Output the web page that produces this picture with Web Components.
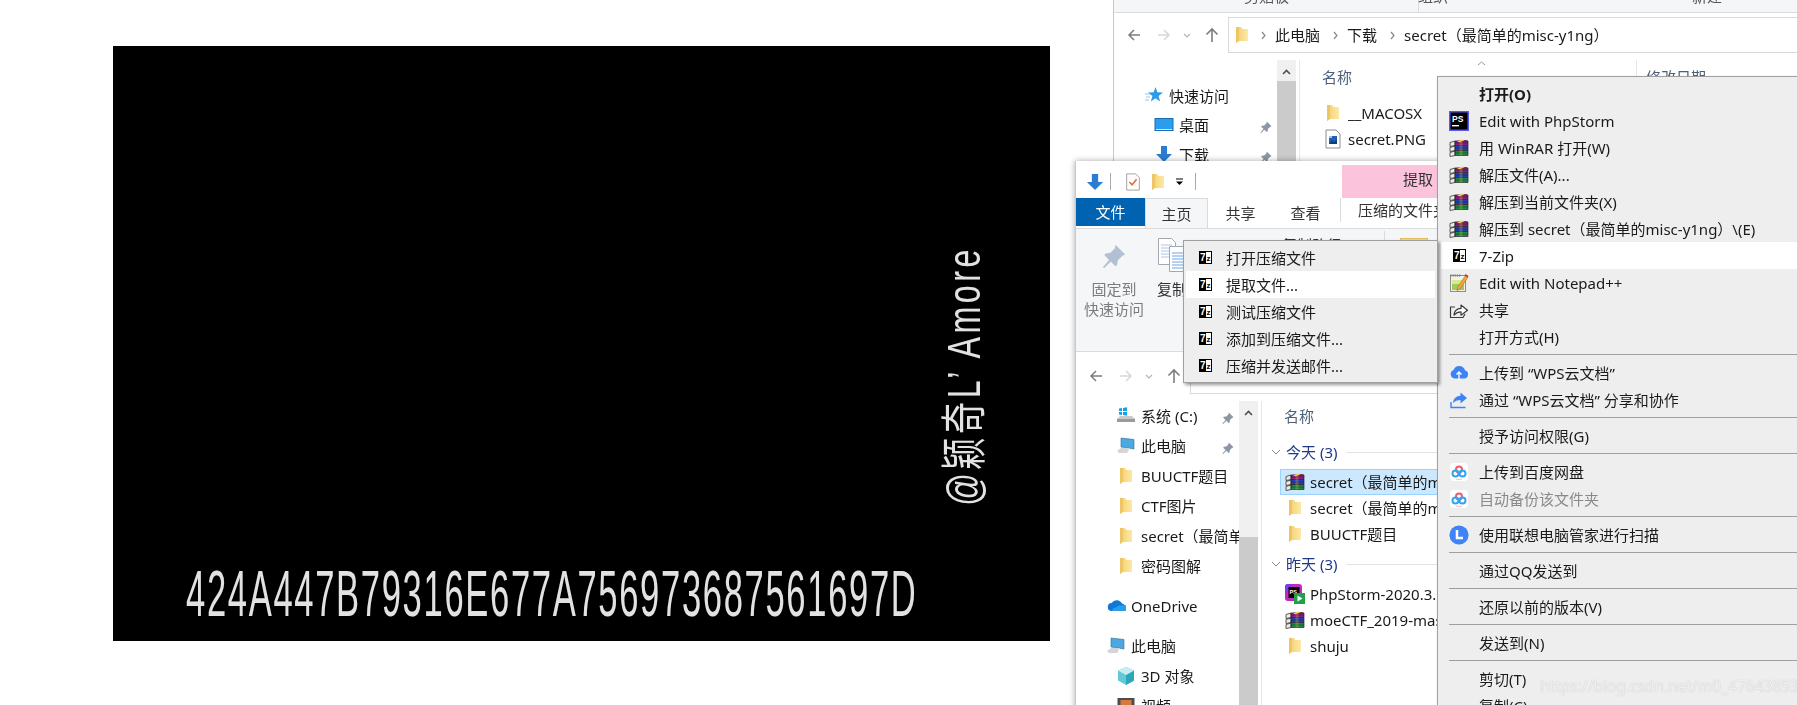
<!DOCTYPE html>
<html lang="zh">
<head>
<meta charset="utf-8">
<title>secret</title>
<style>
  html, body { margin: 0; height: 100%; overflow: hidden; background: #fff; }
</style>
</head>
<body>
<x-stage>
  <x-poster number="424A447B79316E677A756973687561697D" credit="@颖奇L’ Amore"></x-poster>

  <x-window slot="windows" class="back">
    <x-ribbon-strip slot="top"></x-ribbon-strip>
    <x-navbar slot="nav" crumbs="此电脑|下载|secret（最简单的misc-y1ng）" style="--nav-top:4px;--nav-h:47px"></x-navbar>
    <x-tree slot="tree" style="--tree-top:21px;--row-h:29.6px">
      <x-tree-row icon="star" level="0">快速访问</x-tree-row>
      <x-tree-row icon="desktop" pin>桌面</x-tree-row>
      <x-tree-row icon="download" pin>下载</x-tree-row>
    </x-tree>
    <x-scrollbar slot="scroll" arrow="21" track="0"></x-scrollbar>
    <x-filelist slot="list" style="--head-h:33px;--head-gap:7px" sort>
      <x-file-row icon="folder">__MACOSX</x-file-row>
      <x-file-row icon="png">secret.PNG</x-file-row>
    </x-filelist>
  </x-window>

  <x-window slot="windows" class="front">
    <x-qat slot="top"></x-qat>
    <x-tabs slot="top"></x-tabs>
    <x-home-ribbon slot="top"></x-home-ribbon>
    <x-navbar slot="nav" style="--nav-top:6px;--nav-h:49px"></x-navbar>
    <x-tree slot="tree" style="--tree-top:0px;--row-h:30px">
      <x-tree-row icon="drive" pin>系统 (C:)</x-tree-row>
      <x-tree-row icon="pc" pin>此电脑</x-tree-row>
      <x-tree-row icon="folder">BUUCTF题目</x-tree-row>
      <x-tree-row icon="folder">CTF图片</x-tree-row>
      <x-tree-row icon="folder">secret（最简单的misc-y1ng）</x-tree-row>
      <x-tree-row icon="folder">密码图解</x-tree-row>
      <x-tree-row icon="onedrive" level="0" gap>OneDrive</x-tree-row>
      <x-tree-row icon="pc" level="0" gap>此电脑</x-tree-row>
      <x-tree-row icon="cube">3D 对象</x-tree-row>
      <x-tree-row icon="video">视频</x-tree-row>
    </x-tree>
    <x-scrollbar slot="scroll" arrow="36" track="100"></x-scrollbar>
    <x-filelist slot="list" style="--head-h:30px;--head-gap:8px">
      <x-group-row>今天 (3)</x-group-row>
      <x-file-row icon="winrar" selected>secret（最简单的misc-y1ng）.zip</x-file-row>
      <x-file-row icon="folder">secret（最简单的misc-y1ng）</x-file-row>
      <x-file-row icon="folder">BUUCTF题目</x-file-row>
      <x-group-row>昨天 (3)</x-group-row>
      <x-file-row icon="phpstorm">PhpStorm-2020.3.exe</x-file-row>
      <x-file-row icon="winrar">moeCTF_2019-master.zip</x-file-row>
      <x-file-row icon="folder">shuju</x-file-row>
    </x-filelist>
  </x-window>

  <x-menu slot="windows" class="main" style="--item-pad:8px;--icon-w:20px;--icon-gap:10px;--menu-pad:3px">
    <x-menu-item strong>打开(O)</x-menu-item>
    <x-menu-item icon="ps">Edit with PhpStorm</x-menu-item>
    <x-menu-item icon="winrar">用 WinRAR 打开(W)</x-menu-item>
    <x-menu-item icon="winrar">解压文件(A)...</x-menu-item>
    <x-menu-item icon="winrar">解压到当前文件夹(X)</x-menu-item>
    <x-menu-item icon="winrar">解压到 secret（最简单的misc-y1ng）\(E)</x-menu-item>
    <x-menu-item icon="sevenzip" active>7-Zip</x-menu-item>
    <x-menu-item icon="notepad">Edit with Notepad++</x-menu-item>
    <x-menu-item icon="share">共享</x-menu-item>
    <x-menu-item>打开方式(H)</x-menu-item>
    <x-menu-sep></x-menu-sep>
    <x-menu-item icon="wpsup">上传到 “WPS云文档”</x-menu-item>
    <x-menu-item icon="wpsshare">通过 “WPS云文档” 分享和协作</x-menu-item>
    <x-menu-sep></x-menu-sep>
    <x-menu-item>授予访问权限(G)</x-menu-item>
    <x-menu-sep></x-menu-sep>
    <x-menu-item icon="baidu">上传到百度网盘</x-menu-item>
    <x-menu-item icon="baidu" disabled>自动备份该文件夹</x-menu-item>
    <x-menu-sep></x-menu-sep>
    <x-menu-item icon="lenovo">使用联想电脑管家进行扫描</x-menu-item>
    <x-menu-sep></x-menu-sep>
    <x-menu-item>通过QQ发送到</x-menu-item>
    <x-menu-sep></x-menu-sep>
    <x-menu-item>还原以前的版本(V)</x-menu-item>
    <x-menu-sep></x-menu-sep>
    <x-menu-item>发送到(N)</x-menu-item>
    <x-menu-sep></x-menu-sep>
    <x-menu-item>剪切(T)</x-menu-item>
    <x-menu-item>复制(C)</x-menu-item>
  </x-menu>

  <x-menu slot="windows" class="sub" style="--item-pad:13px;--icon-w:13px;--icon-gap:14px;--menu-pad:2px">
    <x-menu-item icon="sevenzip">打开压缩文件</x-menu-item>
    <x-menu-item icon="sevenzip" active>提取文件...</x-menu-item>
    <x-menu-item icon="sevenzip">测试压缩文件</x-menu-item>
    <x-menu-item icon="sevenzip">添加到压缩文件...</x-menu-item>
    <x-menu-item icon="sevenzip">压缩并发送邮件...</x-menu-item>
  </x-menu>

  <x-watermark slot="windows">https://blog.csdn.net/m0_47643893</x-watermark>
</x-stage>

<script>
const UI_FONT = '"Noto Sans", "Noto Sans CJK SC", sans-serif';

// every icon is drawn on a 20x20 box
const ICONS = {
  folder: `<defs><linearGradient id="f" x1="0" x2="1" y1="0" y2="0"><stop offset="0" stop-color="#f3cf70"/><stop offset="1" stop-color="#fde9a6"/></linearGradient></defs>
    <path d="M4 2h5l1.500 2H16v12H7.500L4 18z" fill="url(#f)"/><path d="M4 2h3v13l-3 3z" fill="#eec564"/>`,
  winrar: `<path d="M6 3l11-1 2 1v4H6z" fill="#8d1f74"/><path d="M6 7.500h13v4.500H6z" fill="#2340b8"/><path d="M6 12.500h13V17.500H6z" fill="#1d8a40"/>
    <path d="M6 5h13M6 10h13M6 15h13" stroke="#000" stroke-opacity=".3"/>
    <path d="M1 4.500L6 3v4.500L1 8.500zM1 9.500l5-1.500v4.500L1 13.500zM1 14.500l5-1.500v4.500L1 18.500z" fill="#ecece6" stroke="#333" stroke-width=".8"/>
    <path d="M6 3h13v4.500H6zM6 7.500h13v5H6zM6 12.500h13v5H6z" fill="none" stroke="#2a2230" stroke-width=".7"/>
    <path d="M10.500 3h3v14.500h-3z" fill="#d6b548" opacity=".3"/><path d="M8 3.500l5-2 2.500.8-5 2z" fill="#f2d15a"/>`,
  ps: `<rect x=".75" y=".75" width="18.500" height="18.500" fill="#000" stroke="#5b57f2" stroke-width="1.500"/>
    <text x="3" y="10.500" font-family="Liberation Sans, sans-serif" font-weight="700" font-size="8.500" fill="#fff">PS</text>
    <rect x="3" y="14" width="7" height="1.400" fill="#fff"/>`,
  notepad: `<rect x="1.500" y="2.500" width="15" height="16" fill="#f2f2ec" stroke="#8d8d85"/><rect x="3" y="7" width="12" height="10" fill="#9fcb5c"/>
    <path d="M3 7h12v4H3z" fill="#dbe88e"/><path d="M1.800 1.200v2.600M4 1.200v2.600M6.200 1.200v2.600M8.400 1.200v2.600M10.600 1.200v2.600" stroke="#777" stroke-width=".8"/>
    <path d="M16.500 2.500L19 4.200 11 16l-3 1.600.4-3.200z" fill="#f2a73a" stroke="#a8701c" stroke-width=".6"/><path d="M16.500 1l3 2-1 1.600-2.800-2z" fill="#c8302c"/>`,
  share: `<path d="M6 7H1.500v10.500H14l2-3.500" fill="none" stroke="#3c3c3c" stroke-width="1.200"/><path d="M5 15c.4-4 3.200-6.400 7-6.600V5l6.500 5.300-6.500 4.900v-3.400c-2.800 0-5 1-7 3.200z" fill="#fff" stroke="#3c3c3c" stroke-width="1.200" stroke-linejoin="round"/>`,
  wpsup: `<path d="M5.500 15.500A4.400 4.400 0 0 1 4.600 7 6 6 0 0 1 16 7.300a4.200 4.200 0 0 1-.7 8.200z" fill="#3d83f7"/><path d="M10 17.500V9.500M7.500 11.500L10 9l2.500 2.500" stroke="#fff" stroke-width="1.300" fill="none"/>`,
  wpsshare: `<path d="M2 12v5.500h14.500" fill="none" stroke="#3d83f7" stroke-width="1.400"/><path d="M4 13c.4-4.400 3.400-7 7.500-7.200V2.500L18 8l-6.500 5.500V10C8.500 10 6 11 4 13z" fill="#3d83f7"/>`,
  baidu: `<rect x="1" y="1" width="18" height="18" rx="4" fill="#fff"/><circle cx="10" cy="7.500" r="3" fill="none" stroke="#ef5a6e" stroke-width="2"/>
    <circle cx="6.500" cy="11.500" r="3" fill="none" stroke="#2fa6f2" stroke-width="2"/><circle cx="13.500" cy="11.500" r="3" fill="none" stroke="#2fa6f2" stroke-width="2"/><rect x="7" y="16.800" width="6" height="1" fill="#f4b9c4"/>`,
  lenovo: `<circle cx="10" cy="10" r="9.600" fill="#3f83f8"/><path d="M8 5v8h6" fill="none" stroke="#fff" stroke-width="2.500"/>`,
  pin: `<path d="M11 2l7 7-2 .8-3.200 3.200-.6 3.500-1.200.8-3.300-3.300L3 18.500 2 18l4.500-5.200L3.200 9.500 4 8.300l3.500-.6L10.700 4.500z" fill="currentColor"/>`,
  star: `<path d="M11.500 1l1.900 5.300 5.600.2-4.400 3.500 1.500 5.400-4.600-3.100-4.700 3.100 1.600-5.400L4 6.500l5.600-.2z" fill="#2f9ae8"/><path d="M1 8h5M2 11h4M1 14h4" stroke="#8ecaf2" stroke-width="1"/>`,
  desktop: `<rect x="1" y="3.500" width="18" height="12" fill="#2a9df0" stroke="#1a6fb4"/><path d="M2 14h16v1H2z" fill="#cfe9fb"/>`,
  download: `<path d="M7 1h6v8h5l-8 8-8-8h5z" fill="#2b7cd3"/>`,
  drive: `<path d="M1 13l3-3h12l3 3v3H1z" fill="#c9c9c9"/><path d="M1 13h18v3H1z" fill="#9a9a9a"/><path d="M3 2.500l3-.5v3H3zM7 1.900l4-.6V5H7zM3 6h3v3l-3-.5zM7 6h4v3.800L7 9z" fill="#12a0e8"/>`,
  pc: `<path d="M5 2l13 1.500v9.500L5 11z" fill="#4ba9e2" stroke="#2c6e9b" stroke-width=".6"/><path d="M1 15l4-3h9l-3 5H3z" fill="#d5d5d5"/>`,
  onedrive: `<path d="M6 15a4 4 0 0 1-.4-8A6 6 0 0 1 16 7.500 3.800 3.800 0 0 1 16 15z" fill="#0f78d4"/><path d="M6 15h14a3 3 0 0 0-3-5.500c-3-1-6 .5-7 2-2-.2-4 1.500-4 3.500z" fill="#2e9be8"/>`,
  cube: `<path d="M10 1l8 3.500v10L10 19l-8-4.500v-10z" fill="#65c8d6"/><path d="M10 9l8-4.500v10L10 19z" fill="#2aa7b8"/><path d="M10 1l8 3.500L10 9 2 4.500z" fill="#c6eef2"/>`,
  video: `<rect x="1.500" y="2" width="17" height="16" fill="#4d4d4d"/><rect x="4.500" y="4" width="11" height="5" fill="#d97a3a"/><rect x="4.500" y="10" width="11" height="6" fill="#5aa0d8"/>`,
  png: `<path d="M3 1h10l4 4v14H3z" fill="#fff" stroke="#8d8d8d"/><rect x="6" y="7" width="8" height="8" fill="#1f63b5"/><path d="M6 15l3-4 2 2 3-3v5z" fill="#0d3f7d"/><rect x="6" y="7" width="3" height="2" fill="#9ccbf2"/>`,
  phpstorm: `<rect x="0" y="0" width="17" height="17" rx="3" fill="#c02ac0"/><path d="M0 9V3a3 3 0 0 1 3-3h5z" fill="#7a3df0"/><rect x="3.500" y="3" width="11" height="11" fill="#000"/>
    <text x="4.500" y="9.500" font-family="Liberation Sans, sans-serif" font-weight="700" font-size="5.500" fill="#fff">PS</text>
    <rect x="9" y="9" width="11" height="11" fill="#1fa14a"/><path d="M12.500 11.500l5 3-5 3z" fill="#fff"/>`,
  qatdown: `<path d="M6.500 1h7v9H19l-9 9-9-9h5.500z" fill="#2b7cd3"/>`,
  checkdoc: `<path d="M3 1h10l4 4v14H3z" fill="#fff" stroke="#9a9a9a"/><path d="M6 10l3 3 5-6" fill="none" stroke="#e8683a" stroke-width="1.800"/>`
};

const icon = (name) => {
  if (name === 'sevenzip') {
    return `<svg viewBox="0 0 13 13" width="13" height="13"><rect width="7" height="13" fill="#000"/><rect x="6.500" y=".5" width="6" height="12" fill="#fff" stroke="#000"/>
      <text x="1" y="10" font-family="Liberation Sans, sans-serif" font-weight="700" font-size="10" fill="#fff">7</text>
      <text x="7.500" y="10" font-family="Liberation Sans, sans-serif" font-weight="700" font-size="8" fill="#000">z</text></svg>`;
  }
  return `<svg viewBox="0 0 20 20" width="100%" height="100%">${ICONS[name] || ''}</svg>`;
};

class UiElement extends HTMLElement {
  constructor() {
    super();
    this.attachShadow({ mode: 'open' });
  }
  connectedCallback() {
    this.shadowRoot.innerHTML = this.render();
  }
}

class XStage extends UiElement {
  render() {
    return `<style>
      :host { display: block; position: relative; width: 1797px; height: 705px; overflow: hidden; padding: 46px 0 0 113px; box-sizing: border-box; }
      ::slotted(.back) { position: absolute; left: 1113px; top: 0; width: 760px; height: 320px; filter: blur(.35px); }
      ::slotted(.front) { position: absolute; left: 1075px; top: 161px; width: 560px; height: 560px; box-shadow: 0 0 6px rgba(0,0,0,.35); filter: blur(.35px); }
      ::slotted(.main) { position: absolute; left: 1437px; top: 76px; width: 420px; filter: blur(.35px); }
      ::slotted(.sub) { position: absolute; left: 1183px; top: 240px; width: 255px; filter: blur(.35px); }
      ::slotted(x-watermark) { position: absolute; left: 1540px; top: 673px; }
    </style><slot></slot><slot name="windows"></slot>`;
  }
}

class XPoster extends UiElement {
  render() {
    return `<style>
      :host { display: flex; flex-direction: column; width: 937px; height: 595px; background: #000; color: #e2e2e2; font-family: "Liberation Sans", "Noto Sans CJK SC", sans-serif; overflow: hidden; }
      .credit { align-self: flex-end; margin: 204px 64px 0 0; width: 44px; height: 252px; display: flex; align-items: center; justify-content: center; filter: blur(.5px); }
      .credit span { white-space: nowrap; font-size: 46px; line-height: 44px; letter-spacing: 5px; transform: rotate(-90deg) scale(.7, 1); }
      .number { margin: auto 0 16px 73px; white-space: nowrap; font-size: 64px; line-height: 62px; letter-spacing: 3.100px; width: 731px; transform: scaleX(.54); transform-origin: left center; filter: blur(.5px); }
    </style>
    <div class="credit"><span>${this.getAttribute('credit')}</span></div>
    <div class="number">${this.getAttribute('number')}</div>`;
  }
}

class XWindow extends UiElement {
  render() {
    return `<style>
      :host { display: block; background: #fff; border-left: 1px solid #c9c9c9; color: #1a1a1a; font: 15px/20px ${UI_FONT}; }
      .main { display: grid; grid-template-columns: 163px 19px 1fr; align-items: stretch; height: 420px; }
      ::slotted(x-filelist) { margin-left: 3px; }
    </style>
    <slot name="top"></slot><slot name="nav"></slot>
    <div class="main"><slot name="tree"></slot><slot name="scroll"></slot><slot name="list"></slot></div>`;
  }
}

class XRibbonStrip extends UiElement {
  render() {
    return `<style>
      :host { display: flex; height: 12px; background: #f5f6f7; border-bottom: 1px solid #dadbdc; overflow: hidden; color: #555; font-size: 15px; line-height: 20px; }
      span { position: relative; top: -14px; white-space: nowrap; }
      .a { margin-left: 130px; }
      .sep { margin-left: 129px; width: 1px; background: #dadbdc; }
      .b { margin-left: -1px; }
      .c { margin-left: 244px; }
    </style><span class="a">剪贴板</span><div class="sep"></div><span class="b">组织</span><span class="c">新建</span>`;
  }
}

class XNavbar extends UiElement {
  render() {
    const crumbs = (this.getAttribute('crumbs') || '').split('|').filter(Boolean);
    const chev = '<svg class="chev" viewBox="0 0 5 9" width="5" height="9"><path d="M1 1l3 3.500L1 8" fill="none" stroke="#888" stroke-width="1.200"/></svg>';
    return `<style>
      :host { display: flex; align-items: flex-start; box-sizing: border-box; height: var(--nav-h); padding: var(--nav-top) 0 0 5px; }
      .btn { height: 36px; display: flex; align-items: center; justify-content: center; flex: none; }
      .box { flex: 1; height: 36px; box-sizing: border-box; border: 1px solid #d9d9d9; display: flex; align-items: center; padding-left: 5px; white-space: nowrap; overflow: hidden; }
      .fold { width: 20px; height: 20px; margin-left: -2px; }
      .chev { margin: 0 9px 0 13px; flex: none; }
      .fold + .chev { margin-left: 9px; }
    </style>
    <div class="btn" style="width:30px"><svg width="14" height="14" viewBox="0 0 14 14"><path d="M13 7H2M7 2L2 7l5 5" fill="none" stroke="#7d7d7d" stroke-width="1.500"/></svg></div>
    <div class="btn" style="width:30px"><svg width="14" height="14" viewBox="0 0 14 14"><path d="M1 7h11M7 2l5 5-5 5" fill="none" stroke="#d8d8d8" stroke-width="1.500"/></svg></div>
    <div class="btn" style="width:16px"><svg width="8" height="5" viewBox="0 0 8 5"><path d="M1 1l3 3 3-3" fill="none" stroke="#b5b5b5" stroke-width="1.200"/></svg></div>
    <div class="btn" style="width:33px"><svg width="14" height="16" viewBox="0 0 14 16"><path d="M7 15V2M1.500 7.500L7 2l5.500 5.500" fill="none" stroke="#7d7d7d" stroke-width="1.600"/></svg></div>
    <div class="box">${crumbs.length ? `<div class="fold">${icon('folder')}</div>` + crumbs.map((c) => `${chev}<span>${c}</span>`).join('') : ''}</div>`;
  }
}

class XQat extends UiElement {
  render() {
    return `<style>
      :host { display: flex; align-items: center; height: 37px; box-sizing: border-box; padding: 4px 0 0 10px; }
      .i { width: 18px; height: 18px; flex: none; }
      .sep { width: 1px; height: 17px; background: #a8a8a8; flex: none; }
      .tab { margin-left: 146px; width: 152px; height: 33px; line-height: 29px; background: #fbc4dc; text-align: center; color: #333; flex: none; }
    </style>
    <div class="i">${icon('qatdown')}</div>
    <div class="sep" style="margin-left:6px"></div>
    <div class="i" style="margin-left:13px">${icon('checkdoc')}</div>
    <div class="i" style="margin-left:6px;width:20px;height:20px">${icon('folder')}</div>
    <svg width="9" height="8" viewBox="0 0 9 8" style="margin-left:7px;flex:none"><path d="M1 1h7" stroke="#000"/><path d="M1 3.500h7L4.500 7z" fill="#000"/></svg>
    <div class="sep" style="margin-left:11px"></div>
    <div class="tab">提取</div>`;
  }
}

class XTabs extends UiElement {
  render() {
    return `<style>
      :host { display: flex; height: 31px; box-sizing: border-box; border-bottom: 1px solid #dadbdc; color: #333; white-space: nowrap; }
      div { display: flex; align-items: center; justify-content: center; flex: none; height: 30px; }
      .file { width: 69px; height: 28px; background: #0063b1; color: #fff; }
      .home { width: 63px; background: #f5f6f7; border: 1px solid #dadbdc; border-bottom: 0; box-sizing: border-box; }
      .t { width: 65px; }
      .ctx { margin-left: 2px; border-left: 1px solid #dadbdc; padding-left: 17px; height: 24px; }
    </style>
    <div class="file">文件</div><div class="home">主页</div><div class="t">共享</div><div class="t">查看</div><div class="ctx">压缩的文件夹工具</div>`;
  }
}

class XHomeRibbon extends UiElement {
  render() {
    return `<style>
      :host { display: flex; height: 123px; box-sizing: border-box; background: #f5f6f7; border-bottom: 1px solid #dadbdc; padding-top: 9px; white-space: nowrap; overflow: hidden; }
      .pin { width: 76px; display: flex; flex-direction: column; align-items: center; color: #7c7c7c; }
      .pin .i { width: 28px; height: 28px; margin: 4px 0 9px; color: #b3bfd2; }
      .copy { margin-left: 5px; width: 60px; color: #333; }
      .copy svg { display: block; margin-bottom: 7px; }
      .path { margin-left: 65px; margin-top: -3px; color: #333; }
      .sep { margin-left: 42px; width: 1px; height: 100px; background: #dadbdc; margin-top: -7px; }
      .y { margin-left: 15px; width: 26px; height: 24px; background: #f6d77c; border: 1px solid #e3bf5c; }
    </style>
    <div class="pin"><div class="i">${icon('pin')}</div><span>固定到</span><span>快速访问</span></div>
    <div class="copy"><svg width="34" height="34" viewBox="0 0 34 34">
      <path d="M1.500 .5h13l4 4v22h-17z" fill="#fff" stroke="#a4a8ae"/><path d="M4 7h11M4 10h11M4 13h11M4 16h11M4 19h11" stroke="#a8c6ec"/>
      <path d="M12.500 8.500h15l5 5v20h-20z" fill="#fff" stroke="#a4a8ae"/><path d="M15 15h15M15 18h15M15 21h15M15 24h15M15 27h15M15 30h15" stroke="#6fa5e6"/></svg>复制</div>
    <div class="path">复制路径</div><div class="sep"></div><div class="y"></div>`;
  }
}

class XTree extends UiElement {
  render() {
    return `<style>:host { display: block; box-sizing: border-box; padding-top: var(--tree-top); overflow: hidden; min-width: 0; }</style><slot></slot>`;
  }
}

class XTreeRow extends UiElement {
  render() {
    const top = this.getAttribute('level') === '0';
    return `<style>
      :host { display: flex; align-items: center; height: var(--row-h); white-space: nowrap; padding-left: ${top ? 30 : 40}px; position: relative; overflow: hidden; ${this.hasAttribute('gap') ? 'margin-top: 10px;' : ''} }
      .i { width: 20px; height: 20px; margin-right: 5px; flex: none; }
      .p { position: absolute; right: 4px; top: calc(50% - 7px); width: 14px; height: 14px; color: #8d96a5; }
      span { overflow: hidden; }
    </style>
    <div class="i">${icon(this.getAttribute('icon'))}</div><span><slot></slot></span>
    ${this.hasAttribute('pin') ? `<div class="p">${icon('pin')}</div>` : ''}`;
  }
}

class XScrollbar extends UiElement {
  render() {
    const arrow = this.getAttribute('arrow');
    const track = this.getAttribute('track');
    return `<style>
      :host { display: flex; flex-direction: column; background: #cbcbcb; }
      .a { height: ${arrow}px; background: #f0f0f0; display: flex; justify-content: center; padding-top: 9px; box-sizing: border-box; flex: none; }
      .t { height: ${track}px; background: #f0f0f0; flex: none; }
    </style>
    <div class="a"><svg width="9" height="6" viewBox="0 0 9 6"><path d="M1 5l3.500-3.500L8 5" fill="none" stroke="#505050" stroke-width="1.600"/></svg></div><div class="t"></div>`;
  }
}

class XFilelist extends UiElement {
  render() {
    return `<style>
      :host { display: block; border-left: 1px solid #e8e8e8; min-width: 0; overflow: hidden; }
      .head { display: flex; align-items: center; height: var(--head-h); margin-bottom: var(--head-gap); padding-left: 22px; color: #4c607a; white-space: nowrap; }
      .name { width: 315px; display: flex; align-items: center; height: 100%; border-right: 1px solid #e5e5e5; box-sizing: border-box; }
      .sort { margin: -26px 0 0 125px; }
      .date { padding-left: 9px; }
    </style>
    <div class="head">${this.hasAttribute('sort')
      ? `<div class="name">名称<svg class="sort" width="9" height="5" viewBox="0 0 9 5"><path d="M1 4l3.500-3L8 4" fill="none" stroke="#9a9a9a"/></svg></div><div class="date">修改日期</div>`
      : '名称'}</div>
    <slot></slot>`;
  }
}

class XFileRow extends UiElement {
  render() {
    const sel = this.hasAttribute('selected');
    return `<style>
      :host { display: flex; align-items: center; box-sizing: border-box; height: 26px; margin-left: 18px; padding-left: ${sel ? 4 : 5}px; white-space: nowrap; border: 1px solid ${sel ? '#99d1ff' : 'transparent'}; border-left-width: ${sel ? 1 : 0}px; background: ${sel ? '#cce8ff' : 'transparent'}; }
      .i { width: 20px; height: 20px; margin-right: 5px; flex: none; }
    </style><div class="i">${icon(this.getAttribute('icon'))}</div><slot></slot>`;
  }
}

class XGroupRow extends UiElement {
  render() {
    return `<style>
      :host { display: flex; align-items: center; height: 26px; margin: 0 0 4px 9px; color: #1e3a8a; white-space: nowrap; }
      :host(:not(:first-child)) { margin-top: 4px; }
      svg { margin-right: 5px; flex: none; }
      .line { margin-left: 9px; flex: 1; height: 1px; background: #e2e2e2; }
    </style><svg width="10" height="6" viewBox="0 0 10 6"><path d="M1 1l4 4 4-4" fill="none" stroke="#8a8a8a"/></svg><slot></slot><div class="line"></div>`;
  }
}

class XMenu extends UiElement {
  render() {
    return `<style>
      :host { display: block; box-sizing: border-box; background: #eeeeee; border: 1px solid #a0a0a0; padding: 3px var(--menu-pad); color: #1a1a1a; font: 15px/20px ${UI_FONT}; box-shadow: 2px 2px 3px rgba(0,0,0,.4); }
    </style><slot></slot>`;
  }
}

class XMenuItem extends UiElement {
  render() {
    const name = this.getAttribute('icon');
    return `<style>
      :host { display: flex; align-items: center; height: 27px; padding-left: var(--item-pad); white-space: nowrap; ${this.hasAttribute('active') ? 'background: #fff;' : ''} ${this.hasAttribute('strong') ? 'font-weight: 700;' : ''} ${this.hasAttribute('disabled') ? 'color: #8a8a8a;' : ''} }
      .i { width: var(--icon-w); height: var(--icon-w); margin-right: var(--icon-gap); flex: none; display: flex; align-items: center; justify-content: center; }
    </style><div class="i">${name ? icon(name) : ''}</div><slot></slot>`;
  }
}

class XMenuSep extends UiElement {
  render() {
    return `<style>
      :host { display: block; box-sizing: border-box; height: 9px; padding: 4px 0 0 8px; }
      div { height: 1px; background: #a0a0a0; }
    </style><div></div>`;
  }
}

class XWatermark extends UiElement {
  render() {
    return `<style>
      :host { display: block; color: rgba(255,255,255,.75); font: 15.500px/26px ${UI_FONT}; white-space: nowrap; text-shadow: 0 0 1px rgba(120,120,120,.5); }
    </style><slot></slot>`;
  }
}

customElements.define('x-stage', XStage);
customElements.define('x-poster', XPoster);
customElements.define('x-window', XWindow);
customElements.define('x-ribbon-strip', XRibbonStrip);
customElements.define('x-navbar', XNavbar);
customElements.define('x-qat', XQat);
customElements.define('x-tabs', XTabs);
customElements.define('x-home-ribbon', XHomeRibbon);
customElements.define('x-tree', XTree);
customElements.define('x-tree-row', XTreeRow);
customElements.define('x-scrollbar', XScrollbar);
customElements.define('x-filelist', XFilelist);
customElements.define('x-file-row', XFileRow);
customElements.define('x-group-row', XGroupRow);
customElements.define('x-menu', XMenu);
customElements.define('x-menu-item', XMenuItem);
customElements.define('x-menu-sep', XMenuSep);
customElements.define('x-watermark', XWatermark);
</script>
</body>
</html>
